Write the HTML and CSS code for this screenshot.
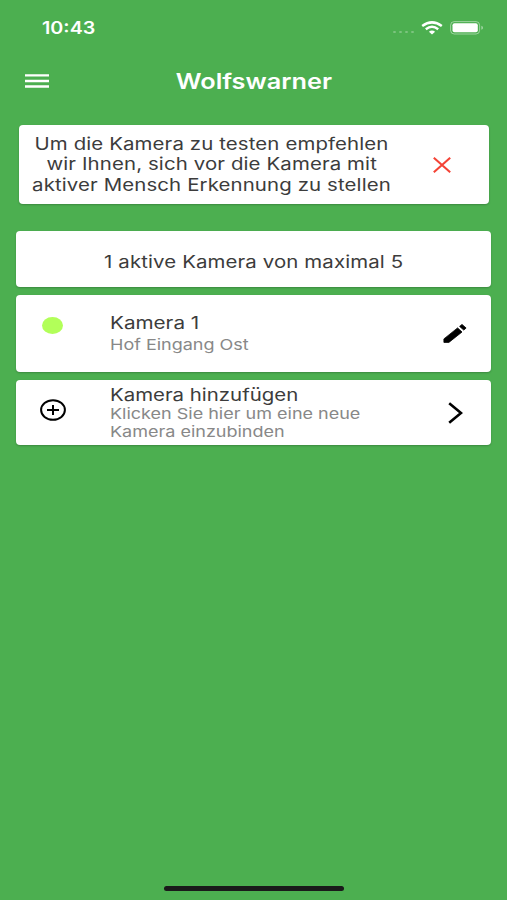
FILE: index.html
```
<!DOCTYPE html>
<html lang="de">
<head>
<meta charset="utf-8">
<title>Wolfswarner</title>
<link rel="stylesheet" href="styles.css">
</head>
<body>
<div class="status">
  <span class="wide time">10:43</span>
  <div class="indicators">
    <div class="dots"><i></i><i></i><i></i><i></i></div>
    <svg class="wifi" width="22" height="14" viewBox="0 0 22 14"><g fill="none" stroke="#fff" stroke-width="2.5"><path d="M1.2 5Q11-2.2 20.8 5"/><path d="M4.8 8.2Q11 3.4 17.2 8.2"/></g><path d="M7.9 10.7Q11 8.5 14.1 10.7L11 13.4Z" fill="#fff"/></svg>
    <svg class="battery" width="34" height="14" viewBox="0 0 34 14"><rect x=".6" y=".6" width="29" height="12.4" rx="3.6" fill="none" stroke="#fff" stroke-opacity=".45"/><rect x="2.5" y="2.3" width="25.3" height="9" rx="2" fill="#fff"/><path d="M31.4 4.8Q33 5.5 33 6.8T31.4 8.8Z" fill="#fff" fill-opacity=".5"/></svg>
  </div>
</div>
<header class="bar">
  <svg class="menu" width="24" height="14" viewBox="0 0 24 14"><path d="M0 1.4H24M0 7H24M0 12.5H24" stroke="#fff" stroke-width="2.3"/></svg>
  <h1 class="wide title">Wolfswarner</h1>
</header>
<main>
  <section class="card notice">
    <p class="notice-text"><span class="wide">Um die Kamera zu testen empfehlen</span><span class="wide">wir Ihnen, sich vor die Kamera mit</span><span class="wide">aktiver Mensch Erkennung zu stellen</span></p>
    <svg class="close" width="18" height="16" viewBox="0 0 18 16"><path d="M.8.8 17.2 15.2M17.2.8.8 15.2" stroke="#f44336" stroke-width="2.1"/></svg>
  </section>
  <section class="card count"><span class="wide">1 aktive Kamera von maximal 5</span></section>
  <section class="card row camera">
    <span class="online"></span>
    <div class="label"><span class="wide name">Kamera 1</span><span class="wide sub">Hof Eingang Ost</span></div>
    <svg class="pencil" width="24" height="21" viewBox="0 0 24 21"><path d="M.9 15.9 14.6 4.9 19 9 5.9 19.4H.9ZM16.6 3.4 19 1.4 23.1 5 20.8 7.1Z" stroke="#000" stroke-width=".8" stroke-linejoin="round"/></svg>
  </section>
  <section class="card row add">
    <svg class="plus" width="26" height="22" viewBox="0 0 26 22"><g fill="none" stroke="#000" stroke-width="2"><ellipse cx="13" cy="11" rx="11.9" ry="9.8"/><path d="M7 11H19M13 6V16"/></g></svg>
    <div class="label"><span class="wide name">Kamera hinzufügen</span><span class="wide sub">Klicken Sie hier um eine neue</span><span class="wide sub">Kamera einzubinden</span></div>
    <svg class="chevron" width="15" height="22" viewBox="0 0 15 22"><path d="M1.2 1.2 13 11 1.2 20.8" fill="none" stroke="#000" stroke-width="2.6"/></svg>
  </section>
</main>
<div class="home"></div>
</body>
</html>
```
FILE: styles.css
```
* { box-sizing: border-box; }
body { margin: 0; height: 900px; display: flex; flex-direction: column; background: #4caf50; font-family: Inter, "Liberation Sans", sans-serif; color: #3c3c3c; overflow: hidden; }
.wide { display: block; width: max-content; transform: scaleX(1.2); white-space: nowrap; }
.status { height: 54px; padding: 1px 23px 0 42px; display: flex; align-items: center; justify-content: space-between; }
.time { color: #fff; font-size: 17px; font-weight: 600; line-height: 20px; transform: scaleX(1.16); transform-origin: left; }
.indicators { display: flex; align-items: center; }
.dots { display: flex; gap: 3px; margin: 9px 7px 0 0; }
.dots i { width: 3px; height: 2.4px; border-radius: 50%; background: rgba(255,255,255,.28); }
.wifi { margin-right: 7px; }
.bar { height: 54px; display: grid; grid-template-columns: 1fr auto 1fr; align-items: center; padding: 0 25px; }
.title { margin: 1px 0 0; color: #fff; font-size: 21px; font-weight: 600; line-height: 28px; transform: scaleX(1.205); }
main { display: flex; flex-direction: column; gap: 8px; padding: 17px 16px 0; }
.card { background: #fff; border-radius: 4px; box-shadow: 0 1px 2px rgba(0,0,0,.22); display: flex; align-items: center; }
.notice { height: 79px; margin: 0 2px 19px 3px; padding: 0 38px 0 14px; justify-content: space-between; }
.notice-text { margin: 0; width: 358px; display: flex; flex-direction: column; align-items: center; font-size: 17px; line-height: 20.4px; letter-spacing: .1px; }
.count { height: 56px; justify-content: center; font-size: 17px; letter-spacing: .1px; padding-top: 5px; }
.row { display: grid; grid-template-columns: 94px 1fr auto; }
.camera { height: 77px; padding-right: 24px; }
.add { height: 65px; padding-right: 28px; }
.online { width: 21px; height: 17px; border-radius: 50%; background: #b2ff59; margin: -17px 0 0 26px; }
.plus { margin: -6px 0 0 24px; }
.label .wide { transform-origin: left; }
.name { font-size: 17px; line-height: 22px; }
.sub { font-size: 15px; line-height: 18px; color: #888; }
.camera .name { margin: -1px 0 2px; transform: scaleX(1.215); }
.add .name { margin-bottom: -1px; }
.home { width: 180px; height: 5px; border-radius: 3px; background: #1a1a1a; margin: auto auto 9px; }
```
